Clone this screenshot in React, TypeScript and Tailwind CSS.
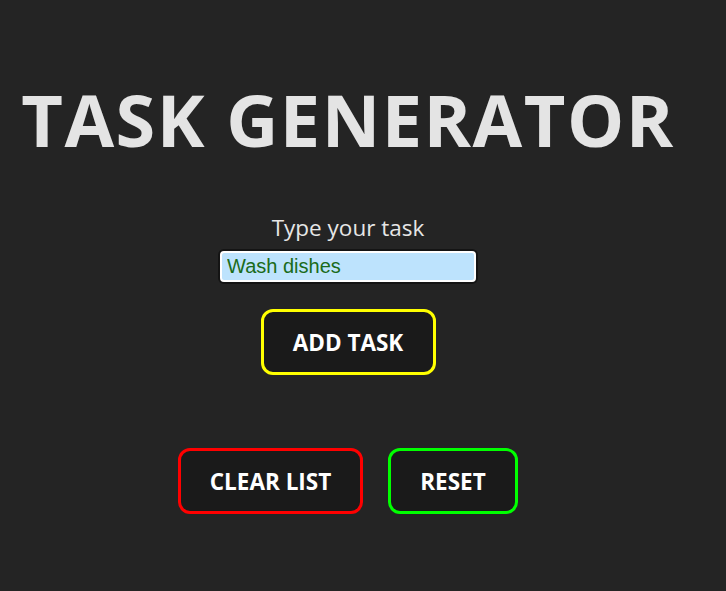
export default function App() {
  return (
    <div
      className="min-h-[591px] w-full bg-[#242424] text-[#e6e6e6]"
      style={{ fontFamily: '"Open Sans", "Noto Sans", sans-serif' }}
    >
      <div className="flex w-[696px] flex-col items-center pt-[76px]">
        <h1 className="text-[72px] font-bold leading-[1.2] tracking-[1.5px] text-[#e4e4e4]">
          TASK GENERATOR
        </h1>
        <label className="mt-[51px] text-[22.5px] leading-[30px] text-[#e6e6e6]">Type your task</label>
        <div className="mt-[6px] rounded-[6px] border-[2px] border-[#141414]">
          <input
            defaultValue="Wash dishes"
            className="h-[31px] w-[256px] rounded-[4px] border-[2px] border-white bg-[#bde3fd] px-[5px] text-[20px] text-[#1a6b1a] outline-none"
            style={{ fontFamily: '"Liberation Sans", Arial, sans-serif', caretColor: '#0a4a0a' }}
          />
        </div>
        <button className="mt-[25px] h-[66px] w-[175px] rounded-[12px] border-[3px] border-[#ffff00] bg-[#1a1a1a] text-[22.5px] font-bold text-white">
          ADD TASK
        </button>
        <div className="mt-[73px] flex gap-[25px]">
          <button className="h-[66px] w-[185px] rounded-[12px] border-[3px] border-[#ff0000] bg-[#1a1a1a] text-[22.5px] font-bold text-white">
            CLEAR LIST
          </button>
          <button className="h-[66px] w-[130px] rounded-[12px] border-[3px] border-[#00ff00] bg-[#1a1a1a] text-[22.5px] font-bold text-white">
            RESET
          </button>
        </div>
      </div>
    </div>
  );
}
